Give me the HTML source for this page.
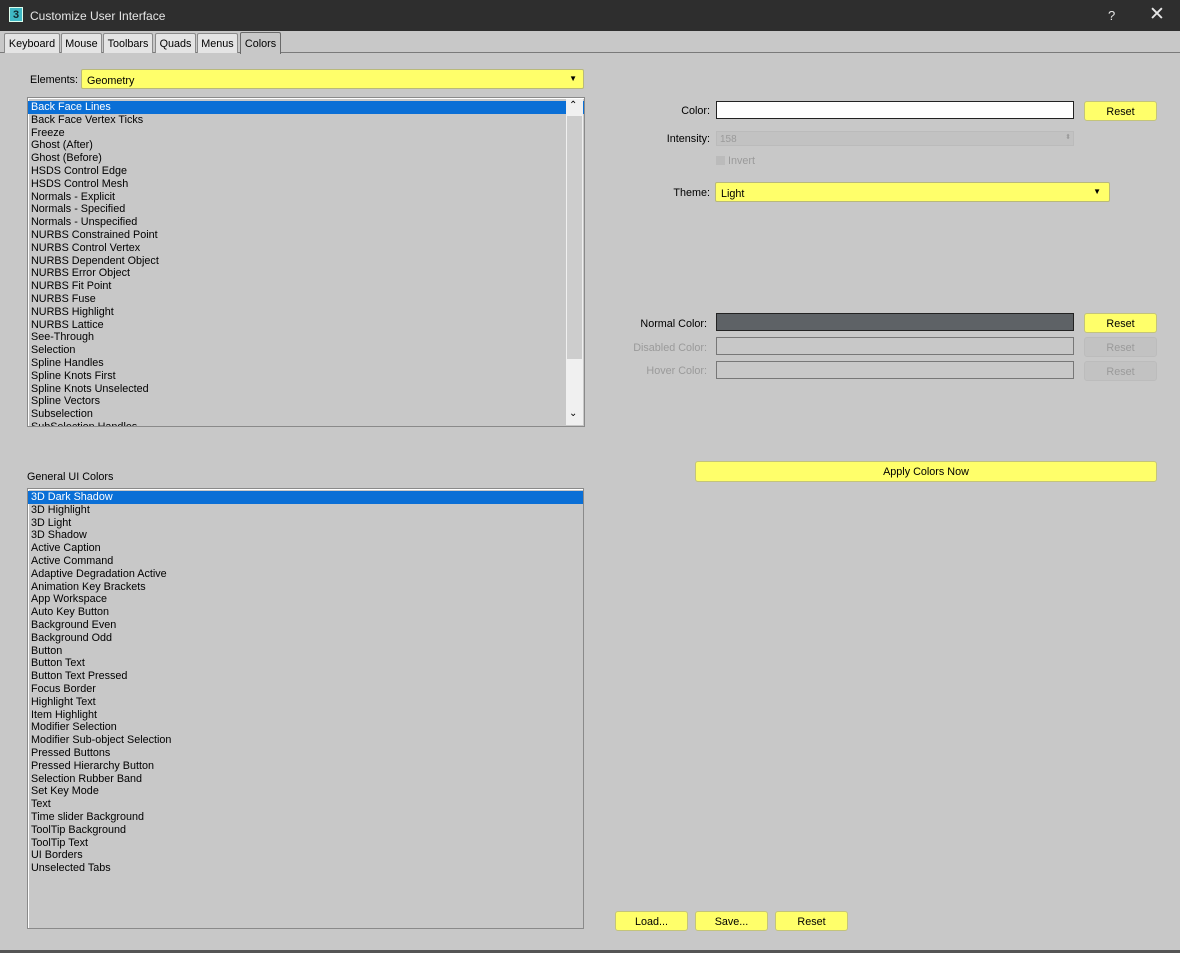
<!DOCTYPE html>
<html><head><meta charset="utf-8"><style>
*{box-sizing:border-box;margin:0;padding:0}
body{width:1180px;height:953px;background:#c8c8c8;font-family:"Liberation Sans",sans-serif;font-size:10.8px;color:#000;position:relative;overflow:hidden}
.a{position:absolute}
.title{left:0;top:0;width:1180px;height:31px;background:#2e2e2e;color:#e6e6e6;font-size:12px}
.tab{top:33px;height:20px;border:1px solid #8a8a8a;border-bottom:none;background:#e4e4e4;font-size:10.8px;padding-top:4px;text-align:center;border-radius:2px 2px 0 0}
.list{border:1px solid #8a8a8a;background:#c8c8c8;overflow:hidden;box-shadow:inset 1px 1px 0 #fff}
.list div{height:12.8px;line-height:13px;padding-left:3px;white-space:nowrap}
.sel{background:#0a6fd6;color:#fff}
.yel{background:#ffff6a;border:1px solid #b9b97a;border-radius:2px}
.btn{background:#ffff6a;border:1px solid #c4c47a;border-radius:3px;text-align:center;line-height:20px}
.dbtn{background:#c2c2c2;border:1px solid #bcbcbc;border-radius:3px;text-align:center;line-height:20px;color:#9a9a9a}
.lbl{text-align:right;width:120px}
.box{border:1px solid #444;}
.dis{color:#9a9a9a}
</style></head><body>
<div class="a title">
 <div class="a" style="left:9px;top:7px;width:14px;height:15px;background:#3fb8c4;color:#102a30;font-weight:bold;font-size:11px;text-align:center;line-height:15px;border:1px solid #dfe">3</div>
 <div class="a" style="left:30px;top:9px">Customize User Interface</div>
 <div class="a" style="left:1108px;top:8px;font-size:13px">?</div>
 <div class="a" style="left:1149px;top:3px;font-size:19px">✕</div>
</div>
<div class="a" style="left:0;top:52px;width:1180px;height:1px;background:#7a7a7a"></div>
<div class="a tab" style="left:4px;width:56px">Keyboard</div>
<div class="a tab" style="left:61px;width:41px">Mouse</div>
<div class="a tab" style="left:103px;width:50px">Toolbars</div>
<div class="a tab" style="left:155px;width:41px">Quads</div>
<div class="a tab" style="left:197px;width:41px">Menus</div>
<div class="a tab" style="left:240px;width:41px;background:#c8c8c8;top:32px;height:22px;border-color:#6a6a6a;padding-top:5px">Colors</div>
<div class="a" style="left:0;top:950px;width:1180px;height:3px;background:#555"></div>

<div class="a" style="left:30px;top:74px">Elements:</div>
<div class="a yel" style="left:81px;top:69px;width:503px;height:20px;padding:5px 5px">Geometry<span class="a" style="right:6px;top:4px;font-size:8px">▼</span></div>

<div class="a list" style="left:27px;top:97px;width:558px;height:330px">
<div style="margin-top:3px" class="sel">Back Face Lines</div>
<div>Back Face Vertex Ticks</div><div>Freeze</div><div>Ghost (After)</div><div>Ghost (Before)</div><div>HSDS Control Edge</div><div>HSDS Control Mesh</div><div>Normals - Explicit</div><div>Normals - Specified</div><div>Normals - Unspecified</div><div>NURBS Constrained Point</div><div>NURBS Control Vertex</div><div>NURBS Dependent Object</div><div>NURBS Error Object</div><div>NURBS Fit Point</div><div>NURBS Fuse</div><div>NURBS Highlight</div><div>NURBS Lattice</div><div>See-Through</div><div>Selection</div><div>Spline Handles</div><div>Spline Knots First</div><div>Spline Knots Unselected</div><div>Spline Vectors</div><div>Subselection</div><div>SubSelection Handles</div>
</div>
<div class="a" style="left:566px;top:99px;width:17px;height:326px;background:#f0f0f0"></div>
<div class="a" style="left:567px;top:116px;width:15px;height:243px;background:#cdcdcd"></div>
<div class="a" style="left:569px;top:100px;font-size:10px">⌃</div>
<div class="a" style="left:569px;top:408px;font-size:10px">⌄</div>

<div class="a" style="left:27px;top:471px">General UI Colors</div>
<div class="a list" style="left:27px;top:488px;width:557px;height:441px">
<div style="margin-top:2px" class="sel">3D Dark Shadow</div>
<div>3D Highlight</div><div>3D Light</div><div>3D Shadow</div><div>Active Caption</div><div>Active Command</div><div>Adaptive Degradation Active</div><div>Animation Key Brackets</div><div>App Workspace</div><div>Auto Key Button</div><div>Background Even</div><div>Background Odd</div><div>Button</div><div>Button Text</div><div>Button Text Pressed</div><div>Focus Border</div><div>Highlight Text</div><div>Item Highlight</div><div>Modifier Selection</div><div>Modifier Sub-object Selection</div><div>Pressed Buttons</div><div>Pressed Hierarchy Button</div><div>Selection Rubber Band</div><div>Set Key Mode</div><div>Text</div><div>Time slider Background</div><div>ToolTip Background</div><div>ToolTip Text</div><div>UI Borders</div><div>Unselected Tabs</div>
</div>

<div class="a lbl" style="left:590px;top:105px">Color:</div>
<div class="a box" style="left:716px;top:101px;width:358px;height:18px;background:#fff;border-color:#222"></div>
<div class="a btn" style="left:1084px;top:101px;width:73px;height:20px">Reset</div>
<div class="a lbl" style="left:590px;top:133px">Intensity:</div>
<div class="a" style="left:716px;top:131px;width:358px;height:15px;background:#c2c2c2;border:1px solid #bbb;color:#9a9a9a;padding:2px 3px;font-size:10px">158<span class="a" style="right:2px;top:1px;font-size:7px">⬍</span></div>
<div class="a dis" style="left:716px;top:155px"><span style="display:inline-block;width:9px;height:9px;background:#bbb;vertical-align:-1px"></span> Invert</div>
<div class="a lbl" style="left:590px;top:187px">Theme:</div>
<div class="a yel" style="left:715px;top:182px;width:395px;height:20px;padding:5px 5px">Light<span class="a" style="right:8px;top:4px;font-size:8px">▼</span></div>

<div class="a lbl" style="left:587px;top:318px">Normal Color:</div>
<div class="a box" style="left:716px;top:313px;width:358px;height:18px;background:#5e6266;border-color:#222"></div>
<div class="a btn" style="left:1084px;top:313px;width:73px;height:20px">Reset</div>
<div class="a lbl dis" style="left:587px;top:342px">Disabled Color:</div>
<div class="a box" style="left:716px;top:337px;width:358px;height:18px;border-color:#777;background:#c8c8c8"></div>
<div class="a dbtn" style="left:1084px;top:337px;width:73px;height:20px">Reset</div>
<div class="a lbl dis" style="left:587px;top:365px">Hover Color:</div>
<div class="a box" style="left:716px;top:361px;width:358px;height:18px;border-color:#777;background:#c8c8c8"></div>
<div class="a dbtn" style="left:1084px;top:361px;width:73px;height:20px">Reset</div>

<div class="a btn" style="left:695px;top:461px;width:462px;height:21px">Apply Colors Now</div>
<div class="a btn" style="left:615px;top:911px;width:73px;height:20px">Load...</div>
<div class="a btn" style="left:695px;top:911px;width:73px;height:20px">Save...</div>
<div class="a btn" style="left:775px;top:911px;width:73px;height:20px">Reset</div>
</body></html>
